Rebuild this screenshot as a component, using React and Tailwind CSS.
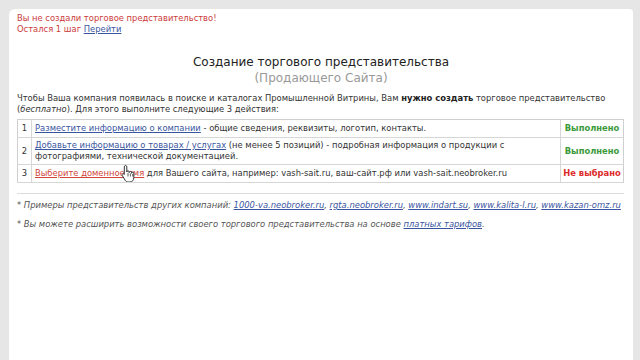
import React from 'react';

const font = { fontFamily: '"DejaVu Sans", Verdana, sans-serif' };

const steps = [
  {
    n: 1,
    link: 'Разместите информацию о компании',
    rest: ' - общие сведения, реквизиты, логотип, контакты.',
    done: true,
  },
  {
    n: 2,
    link: 'Добавьте информацию о товарах / услугах',
    rest: ' (не менее 5 позиций) - подробная информация о продукции с',
    rest2: 'фотографиями, технической документацией.',
    done: true,
  },
  {
    n: 3,
    link: 'Выберите доменное имя',
    rest: ' для Вашего сайта, например: vash-sait.ru, ваш-сайт.рф или vash-sait.neobroker.ru',
    done: false,
  },
];

const examples = ['1000-va.neobroker.ru', 'rgta.neobroker.ru', 'www.indart.su', 'www.kalita-l.ru', 'www.kazan-omz.ru'];

const HandCursor = () => (
  <svg className="absolute left-[112px] top-[155px]" width="14" height="18" viewBox="0 0 14 18">
    <path
      d="M4.5 1.5c.8 0 1.3.6 1.3 1.3v5.2c0-.7.5-1.2 1.2-1.2s1.2.5 1.2 1.2v.6c0-.7.5-1.2 1.2-1.2s1.2.5 1.2 1.2v.7c0-.7.5-1.1 1.1-1.1s1.1.5 1.1 1.2v4.3c0 2.4-1.6 4.3-4 4.3H7.3c-1.4 0-2.3-.6-3.1-1.7L1.3 11.6c-.5-.7-.3-1.4.3-1.7.6-.3 1.2 0 1.6.5l.1.1V2.8c0-.7.5-1.3 1.2-1.3z"
      fill="#fff"
      stroke="#333"
      strokeWidth="1"
      strokeLinejoin="round"
    />
    <path d="M7 9v3.5M9.4 9.5v3M11.7 10v2.5" stroke="#333" strokeWidth="0.8" />
  </svg>
);

export default function App() {
  return (
    <div className="w-[640px] h-[360px] bg-[#e6e6e6] pl-[9px] pr-[7px] pt-[9px] overflow-hidden" style={font}>
      <div className="relative h-full bg-white rounded-tl-[6px] rounded-tr-[4px] px-[8px] pt-[4px] text-[8.4px] leading-[11px] text-[#333]">
        {/* Warning */}
        <div className="text-[#cc3b3b]">
          <div>Вы не создали торговое представительство!</div>
          <div>
            Остался 1 шаг <span className="text-[#3a55a0] underline">Перейти</span>
          </div>
        </div>

        {/* Title */}
        <div className="mt-[19px] text-center text-[12px] leading-[16px]">
          <div className="text-[#222]">Создание торгового представительства</div>
          <div className="text-[#999]">(Продающего Сайта)</div>
        </div>

        {/* Intro */}
        <p className="mt-[7px] text-[#333]">
          Чтобы Ваша компания появилась в поиске и каталогах Промышленной Витрины, Вам{' '}
          <b className="text-[#222]">нужно создать</b> торговое представительство
          <br />
          (<i>бесплатно</i>). Для этого выполните следующие 3 действия:
        </p>

        {/* Steps */}
        <table className="mt-[4px] w-[607px] border-collapse border border-[#cfcfcf]">
          <tbody>
            {steps.map((s) => (
              <tr key={s.n} className={`border-b border-[#d6d6d6] ${s.rest2 ? 'h-[27px]' : 'h-[18px]'}`}>
                <td className="w-[14px] p-0 border-r border-[#d6d6d6] text-center align-middle text-[#333]">{s.n}</td>
                <td className="px-[3px] py-0 align-middle">
                  <span className={`underline ${s.done ? 'text-[#3a55a0]' : 'text-[#d0463a]'}`}>{s.link}</span>
                  {s.rest}
                  {s.rest2 && (
                    <>
                      <br />
                      {s.rest2}
                    </>
                  )}
                </td>
                <td
                  className={`w-[63px] p-0 border-l border-[#d6d6d6] text-center align-middle font-bold ${
                    s.done ? 'text-[#3a9a3a]' : 'text-[#dd2b2b]'
                  }`}
                >
                  {s.done ? 'Выполнено' : 'Не выбрано'}
                </td>
              </tr>
            ))}
          </tbody>
        </table>

        <div className="mt-[10px] w-[607px] border-t border-[#dcdcdc]" />

        {/* Notes */}
        <div className="mt-[6px] italic text-[#555] space-y-[8px]">
          <div>
            * Примеры представительств других компаний:{' '}
            {examples.map((e, i) => (
              <span key={e}>
                <span className="underline text-[#3a55a0]">{e}</span>
                {i < examples.length - 1 && ', '}
              </span>
            ))}
          </div>
          <div>
            * Вы можете расширить возможности своего торгового представительства на основе{' '}
            <span className="underline text-[#3a55a0]">платных тарифов</span>.
          </div>
        </div>

        <HandCursor />
      </div>
    </div>
  );
}
